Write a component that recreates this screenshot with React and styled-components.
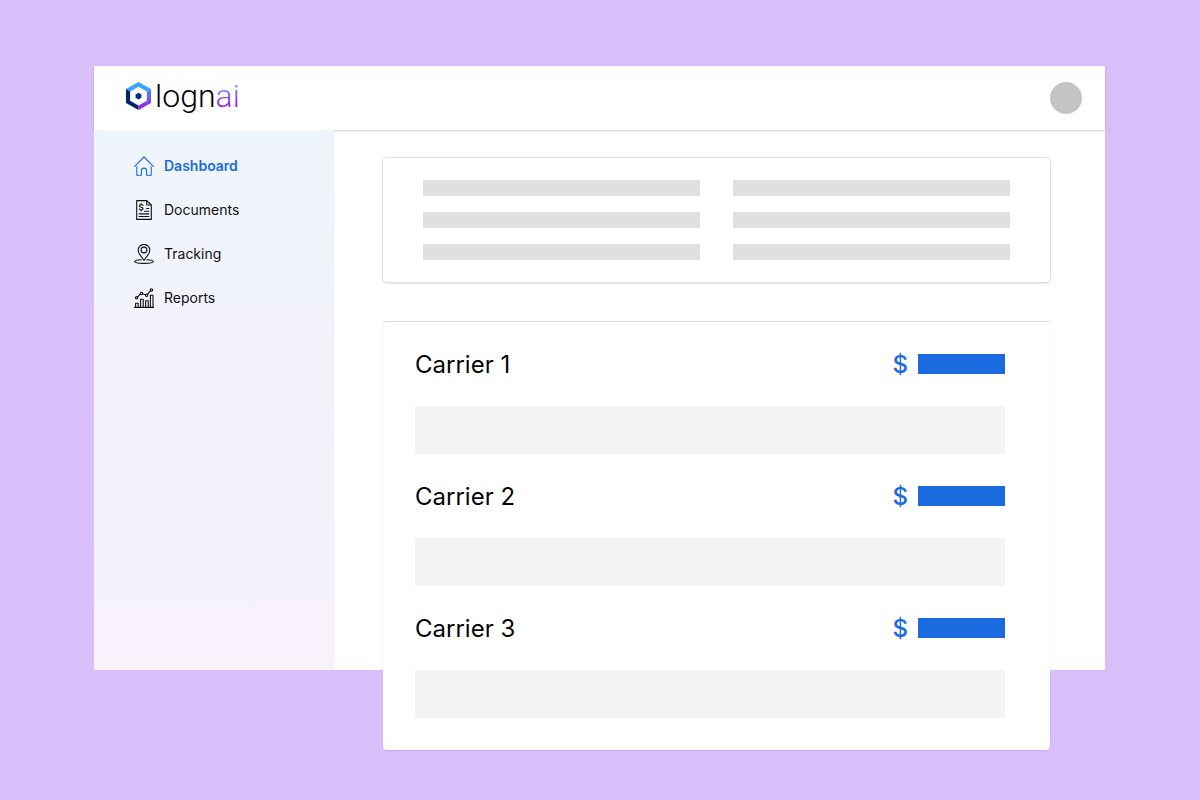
import React from "react";
import styled, { createGlobalStyle } from "styled-components";

const GlobalStyle = createGlobalStyle`
  *, *::before, *::after { box-sizing: border-box; }
  body {
    margin: 0;
    background: #d9bef9;
    font-family: Inter, "Liberation Sans", sans-serif;
    color: #050505;
  }
`;

const Page = styled.div`
  min-height: 100vh;
  padding: 66px 95px 50px 94px;
`;

const Window = styled.div`
  background: #fff;
  margin-bottom: 80px;
`;

const Header = styled.header`
  position: relative;
  display: flex;
  align-items: center;
  justify-content: space-between;
  height: 64px;
  padding: 0 23px 0 32px;
  background: #fff;
  box-shadow: 0 1px 2px rgba(0, 0, 0, 0.2);
`;

const Brand = styled.a`
  display: flex;
  align-items: center;
  gap: 4px;
  padding-bottom: 4px;
  color: #000;
  text-decoration: none;
  font: 300 32px/40px Roboto, Inter, sans-serif;
`;

const BrandAccent = styled.span`
  background: linear-gradient(180deg, #2fb4ff 20%, #7f62f5 45%, #a30fd8 80%);
  background-clip: text;
  -webkit-background-clip: text;
  color: transparent;
`;

const Avatar = styled.button`
  width: 32px;
  height: 32px;
  padding: 0;
  border: 0;
  border-radius: 50%;
  background: #c4c4c4;
`;

const Body = styled.div`
  display: grid;
  grid-template-columns: 240px minmax(0, 1fr);
`;

const Sidebar = styled.nav`
  position: relative;
  padding: 24px 40px;
  background: linear-gradient(180deg, #eff5fc 0%, #f2f3fc 35%, #f4f2fd 75%, #f9f2fd 100%);
`;

const NavList = styled.ul`
  display: flex;
  flex-direction: column;
  gap: 20px;
  margin: 0;
  padding: 0;
  list-style: none;
`;

const NavLink = styled.a`
  display: flex;
  align-items: center;
  gap: 10px;
  color: ${(p) => (p.$active ? "#1a6be0" : "#101010")};
  font-size: 14px;
  line-height: 24px;
  font-weight: ${(p) => (p.$active ? 600 : 400)};
  text-decoration: none;
`;

const Icon = styled.svg`
  flex: none;
  width: 20px;
  height: 20px;
  fill: none;
  stroke: currentColor;
  stroke-width: 1.1;
  stroke-linecap: round;
  stroke-linejoin: round;
`;

const Main = styled.main`
  display: flex;
  flex-direction: column;
  gap: 38px;
  margin-bottom: -80px;
  padding: 27px 54px 0 48px;
`;

const SummaryCard = styled.section`
  display: grid;
  grid-template-columns: 1fr 1fr;
  gap: 16px 33px;
  padding: 22px 40px;
  border: 1px solid #e0e0e0;
  border-radius: 5px;
  box-shadow: 0 1px 2px rgba(0, 0, 0, 0.1);
`;

const SummaryLine = styled.div`
  height: 16px;
  background: #e0e0e0;
`;

const CarrierCard = styled.section`
  position: relative;
  display: flex;
  flex-direction: column;
  gap: 26px;
  margin: 0 1px;
  padding: 27px 45px 32px 32px;
  border-radius: 4px;
  background: #fff;
  box-shadow: 0 0 1px rgba(0, 0, 0, 0.08), 0 1px 2px rgba(0, 0, 0, 0.08);

  &::before {
    content: "";
    position: absolute;
    inset: 0 -1px auto;
    height: 4px;
    border-top: 1px solid #dcdcdc;
    border-radius: 4px 4px 0 0;
  }
`;

const Carrier = styled.article`
  display: flex;
  flex-direction: column;
  gap: 26px;
`;

const CarrierHead = styled.div`
  display: flex;
  align-items: center;
  justify-content: space-between;
  height: 32px;
  font-size: 24px;
  line-height: 32px;
`;

const CarrierName = styled.h2`
  margin: 0;
  padding-top: 2px;
  font: inherit;
`;

const Price = styled.div`
  display: flex;
  align-items: center;
  gap: 10px;
  color: #1a6be0;
`;

const Currency = styled.span`
  padding-top: 2px;
  font-weight: 500;
`;

const PriceBar = styled.div`
  width: 87px;
  height: 20px;
  background: #1a6be0;
`;

const CarrierDetail = styled.div`
  height: 48px;
  background: #f4f4f4;
`;

function LogoMark() {
  return (
    <svg width="25" height="28" viewBox="0 0 25 28" aria-hidden="true">
      <defs>
        <linearGradient id="right" x1="0" y1="0" x2="0" y2="1">
          <stop offset="0" stopColor="#4a86f7" />
          <stop offset="0.5" stopColor="#7757ee" />
          <stop offset="1" stopColor="#a50fd8" />
        </linearGradient>
      </defs>
      <path d="M0 7 12.5 0 25 7 20.9 9.4 12.5 4.7 4.1 9.4Z" fill="#35a6ff" />
      <path d="M0 7 4.1 9.4V18.7L12.5 23.4V28L0 21Z" fill="#032565" />
      <path d="M25 7V21L12.5 28V23.4L20.9 18.7V9.4Z" fill="url(#right)" />
      <path d="M12.5 10.8 15.4 12.4V15.8L12.5 17.4 9.6 15.8V12.4Z" fill="#033078" />
    </svg>
  );
}

const HomeIcon = () => (
  <Icon viewBox="0 0 20 20" aria-hidden="true">
    <path d="M.7 10.3 10 1l9.3 9.3M2.8 10.8v8.4h4.6v-4.5a2.6 2.6 0 0 1 5.2 0v4.5h4.6v-8.4" />
  </Icon>
);

const DocumentIcon = () => (
  <Icon viewBox="0 0 20 20" aria-hidden="true">
    <path d="M2.7.6h10.1l4.5 4.4v14.4H2.7ZM12.8.6v4.4h4.5M5.2 13.9h9.6M5.2 16.5h9.6M12.6 8.5h2.2M10.4 11.3h4.4" />
    <path d="M9 5.5C8.4 4.2 5.4 4.4 5.4 5.9c0 1.7 3.7 1.1 3.7 2.8 0 1.7-3.1 1.8-3.8.4M7.2 3.7v1M7.2 10v1" />
  </Icon>
);

const PinIcon = () => (
  <Icon viewBox="0 0 20 20" aria-hidden="true">
    <path d="M10 16.4C8 13.2 4.2 9.9 4.2 6.2a5.8 5.8 0 0 1 11.6 0c0 3.7-3.8 7-5.8 10.2Z" />
    <circle cx="10" cy="6" r="2.9" />
    <path d="M7.2 15.7c-3.8.2-6.6.8-6.6 1.8 0 1.2 4.2 1.9 9.4 1.9s9.4-.7 9.4-1.9c0-1-2.8-1.6-6.6-1.8" />
  </Icon>
);

const ReportIcon = () => (
  <Icon viewBox="0 0 20 20" aria-hidden="true">
    <path d="M.4 19.4h19.2M1.6 19.4v-4.2h2.6v4.2M6.6 19.4v-8.2h2.6v8.2M11.6 19.4v-6.6h2.6v6.6M16.4 19.4V7.2H19v12.2" />
    <path d="m3.6 8.9 2.8-2.7M8.6 5.8l2.8.9M13.6 6.1l2.8-3.2" />
    <circle cx="2.6" cy="9.8" r="1.2" />
    <circle cx="7.4" cy="5.4" r="1.2" />
    <circle cx="12.6" cy="7.2" r="1.2" />
    <circle cx="17.4" cy="1.9" r="1.2" />
  </Icon>
);

const navItems = [
  { label: "Dashboard", Glyph: HomeIcon, active: true },
  { label: "Documents", Glyph: DocumentIcon },
  { label: "Tracking", Glyph: PinIcon },
  { label: "Reports", Glyph: ReportIcon },
];

const carriers = ["Carrier 1", "Carrier 2", "Carrier 3"];

export default function App() {
  return (
    <Page>
      <GlobalStyle />
      <Window>
        <Header>
          <Brand href="#home">
            <LogoMark />
            <span>
              logn<BrandAccent>ai</BrandAccent>
            </span>
          </Brand>
          <Avatar type="button" aria-label="Account" />
        </Header>
        <Body>
          <Sidebar aria-label="Main">
            <NavList>
              {navItems.map(({ label, Glyph, active }) => (
                <li key={label}>
                  <NavLink
                    href={`#${label.toLowerCase()}`}
                    $active={active}
                    aria-current={active ? "page" : undefined}
                  >
                    <Glyph />
                    {label}
                  </NavLink>
                </li>
              ))}
            </NavList>
          </Sidebar>
          <Main>
            <SummaryCard aria-label="Summary">
              {Array.from({ length: 6 }, (_, i) => (
                <SummaryLine key={i} />
              ))}
            </SummaryCard>
            <CarrierCard aria-label="Carriers">
              {carriers.map((name) => (
                <Carrier key={name}>
                  <CarrierHead>
                    <CarrierName>{name}</CarrierName>
                    <Price>
                      <Currency>$</Currency>
                      <PriceBar />
                    </Price>
                  </CarrierHead>
                  <CarrierDetail />
                </Carrier>
              ))}
            </CarrierCard>
          </Main>
        </Body>
      </Window>
    </Page>
  );
}
